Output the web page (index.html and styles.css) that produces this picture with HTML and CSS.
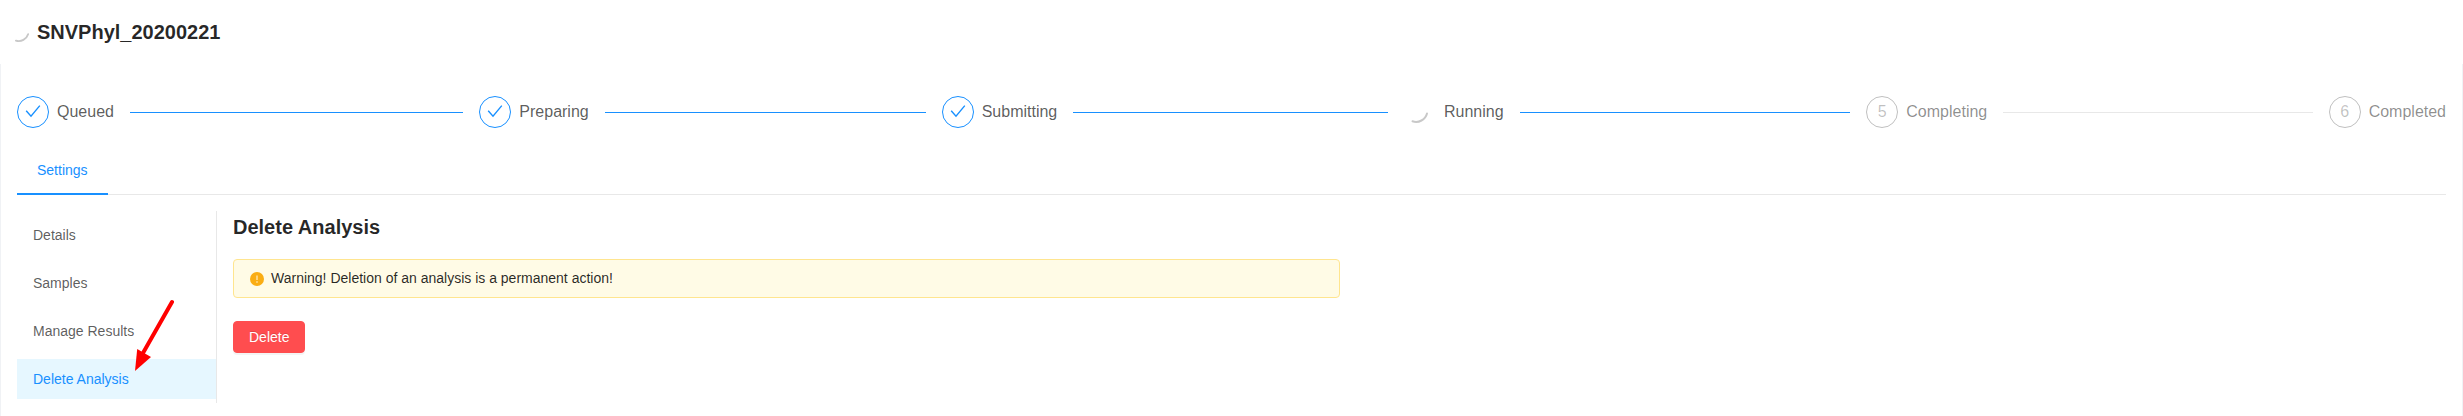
FILE: index.html
```html
<!DOCTYPE html>
<html lang="en">
<head>
<meta charset="utf-8">
<title>SNVPhyl_20200221</title>
<link rel="stylesheet" href="styles.css">
</head>
<body>
<header class="page-header">
  <svg class="header-spinner" viewBox="0 0 20 20"><path d="M6.9 18.6A9.8 9.8 0 0 0 19.2 12.1"/></svg>
  <h1 class="heading">SNVPhyl_20200221</h1>
</header>
<main class="page">
  <div class="steps">
    <div class="step"><span class="step-icon"><svg class="check" viewBox="0 0 16 16"><path d="M1.2 6.8L6 12.2L14.8 1.6"/></svg></span><span class="step-title">Queued</span><span class="step-line"></span></div>
    <div class="step"><span class="step-icon"><svg class="check" viewBox="0 0 16 16"><path d="M1.2 6.8L6 12.2L14.8 1.6"/></svg></span><span class="step-title">Preparing</span><span class="step-line"></span></div>
    <div class="step"><span class="step-icon"><svg class="check" viewBox="0 0 16 16"><path d="M1.2 6.8L6 12.2L14.8 1.6"/></svg></span><span class="step-title">Submitting</span><span class="step-line"></span></div>
    <div class="step"><svg class="step-spinner" viewBox="0 0 32 32"><path d="M8.5 27.3A11.3 11.3 0 0 0 23 19.4"/></svg><span class="step-title">Running</span><span class="step-line"></span></div>
    <div class="step waiting"><span class="step-icon">5</span><span class="step-title">Completing</span><span class="step-line"></span></div>
    <div class="step waiting last"><span class="step-icon">6</span><span class="step-title">Completed</span></div>
  </div>
  <nav class="tabs"><a class="tab">Settings</a></nav>
  <div class="content">
    <ul class="menu">
      <li class="menu-item">Details</li>
      <li class="menu-item">Samples</li>
      <li class="menu-item">Manage Results</li>
      <li class="menu-item selected">Delete Analysis</li>
    </ul>
    <section class="panel">
      <h2 class="heading">Delete Analysis</h2>
      <div class="alert">
        <svg class="alert-icon" viewBox="0 0 14 14"><circle cx="7" cy="7" r="7" fill="#faad14"/><path d="M6.5 3.5h1v4.5h-1z" fill="#fffbe6"/><circle cx="7" cy="10" r=".75" fill="#fffbe6"/></svg>
        <span>Warning! Deletion of an analysis is a permanent action!</span>
      </div>
      <button class="delete-button">Delete</button>
    </section>
  </div>
</main>
<svg class="arrow" viewBox="0 0 44 76"><path d="M42 4L13 55" stroke="#f00" stroke-width="4" stroke-linecap="round"/><path d="M5 73L7.2 51L21 59Z" fill="#f00"/></svg>
</body>
</html>
```
FILE: styles.css
```css
* { box-sizing: border-box; }
body {
  margin: 0;
  height: 416px;
  overflow: hidden;
  background: #fff;
  color: rgba(0, 0, 0, .65);
  font: 14px/21px "Liberation Sans", Arial, sans-serif;
}
svg { display: block; fill: none; }
.heading {
  margin: 0;
  color: rgba(0, 0, 0, .85);
  font-size: 20px;
  line-height: 28px;
  font-weight: 700;
}
.page-header {
  display: flex;
  gap: 8px;
  height: 64px;
  padding: 18px 9px;
}
.header-spinner { width: 20px; height: 20px; margin-top: 4px; stroke: #c8c8c8; stroke-width: 1.8; stroke-linecap: round; }
.page {
  height: 352px;
  padding: 32px 16px 0;
  border: solid #f0f2f5;
  border-width: 0 1px;
}
.steps { display: flex; gap: 16px; font-size: 16px; line-height: 32px; }
.step { display: flex; flex: 1; min-width: 0; height: 32px; }
.step.last { flex: none; }
.step-icon {
  display: grid;
  place-items: center;
  width: 32px;
  height: 32px;
  margin-right: 8px;
  border: 1px solid #1890ff;
  border-radius: 50%;
  line-height: 30px;
}
.check { width: 16px; height: 16px; stroke: #1890ff; stroke-width: 1.4; }
.step-spinner { width: 32px; height: 32px; margin-top: -2px; margin-right: 8px; stroke: #c8c8c8; stroke-width: 2; stroke-linecap: round; }
.step-line { flex: 1; height: 1px; margin: 16px 0 0 16px; background: #1890ff; }
.waiting { color: rgba(0, 0, 0, .45); }
.waiting .step-icon { border-color: rgba(0, 0, 0, .25); color: rgba(0, 0, 0, .25); }
.waiting .step-line { background: #e8e8e8; }
.tabs { display: flex; height: 47px; margin-top: 20px; margin-bottom: 16px; box-shadow: inset 0 -1px #e8e8e8; }
.tab { padding: 12px 20px; color: #1890ff; box-shadow: inset 0 -2px #1890ff; }
.content { display: flex; gap: 16px; }
.menu {
  display: flex;
  flex-direction: column;
  gap: 8px;
  width: 200px;
  height: 192px;
  margin: 0;
  padding: 4px 0;
  border-right: 1px solid #e8e8e8;
  list-style: none;
}
.menu-item { height: 40px; padding-left: 16px; line-height: 40px; }
.menu-item.selected { color: #1890ff; background: #e6f7ff; }
.panel { width: 1107px; padding-top: 2px; }
.alert {
  display: flex;
  align-items: center;
  gap: 7px;
  height: 39px;
  margin: 18px 0 23px;
  padding: 0 16px;
  border: 1px solid #ffe58f;
  border-radius: 4px;
  background: #fffbe6;
  color: rgba(0, 0, 0, .85);
}
.alert-icon { width: 14px; height: 14px; }
.delete-button {
  display: block;
  height: 32px;
  padding: 0 15px;
  border: 1px solid #ff4d4f;
  border-radius: 4px;
  background: #ff4d4f;
  color: #fff;
  font: inherit;
  text-shadow: 0 -1px 0 rgba(0, 0, 0, .12);
  box-shadow: 0 2px 0 rgba(0, 0, 0, .045);
}
.arrow { position: absolute; left: 130px; top: 298px; width: 44px; height: 76px; }
```
